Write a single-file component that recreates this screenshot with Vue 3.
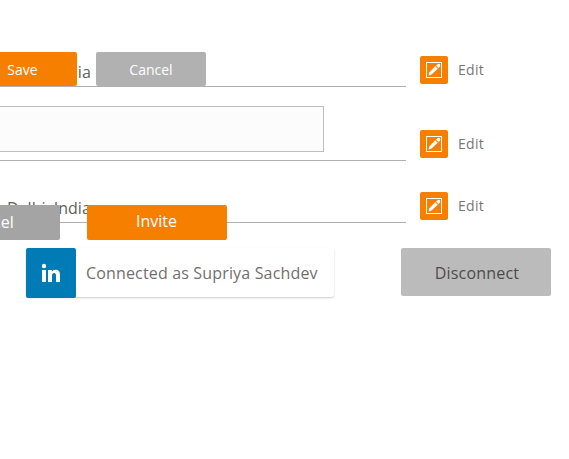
<script setup>
const rows = [
  { size: 'first', value: 'Delhi, India' },
  { size: 'second', value: '' },
  { size: 'third', value: 'Delhi, India' }
]
</script>

<template>
  <main class="page">
    <section v-for="row in rows" :key="row.size" class="row" :class="row.size">
      <div class="field">
        <span v-if="row.value" class="value">{{ row.value }}</span>
        <div v-else class="input"></div>
      </div>
      <div class="edit">
        <span class="edit-icon">
          <svg width="28" height="28" viewBox="0 0 28 28">
            <rect x="6.5" y="6.5" width="15" height="15" fill="none" stroke="#fff" />
            <path d="M8.6 19.4 9.3 16.6 15.2 10.3 17.8 12.8 11.6 18.6Z" fill="#fff" />
            <path d="M16 9.6 17.6 8.2Q19 7.4 19.8 8.3 20.7 9.2 19.9 10.4L18.5 12Z" fill="#fff" />
          </svg>
        </span>
        <span class="edit-label">Edit</span>
      </div>
    </section>

    <button class="btn save">Save</button>
    <button class="btn cancel">Cancel</button>
    <button class="btn dismiss">Cancel</button>
    <button class="btn invite">Invite</button>

    <section class="connection">
      <div class="account">
        <span class="badge">
          <svg width="50" height="50" viewBox="0 0 50 50" fill="#fff">
            <circle cx="18" cy="18" r="2.2" />
            <rect x="16" y="22" width="4" height="12" />
            <path d="M22 22h3.8v1.7c.8-1.3 2-2 3.7-2 3.2 0 4.5 2 4.5 5.1V34h-4v-6.6c0-1.6-.5-2.5-1.8-2.5-1.5 0-2.2 1-2.2 2.6V34h-4z" />
          </svg>
        </span>
        <span class="account-name">Connected as Supriya Sachdev</span>
      </div>
      <button class="disconnect">Disconnect</button>
    </section>
  </main>
</template>

<style>
body {
  background: #fff;
  overflow: hidden;
}
</style>

<style scoped>
.page {
  position: relative;
  width: 569px;
  height: 459px;
  overflow: hidden;
  font-family: "Open Sans", sans-serif;
}
.row {
  display: flex;
  gap: 14px;
}
.first { height: 87px; }
.second { height: 74px; }
.third { height: 62px; }
.field {
  box-sizing: border-box;
  width: 406px;
  border-bottom: 1px solid #b0b0b0;
  display: flex;
  align-items: flex-end;
}
.value {
  padding: 0 0 3px 7px;
  font-size: 16px;
  line-height: 22px;
  font-weight: 400;
  color: #606060;
}
.input {
  box-sizing: border-box;
  width: 324px;
  height: 46px;
  margin-bottom: 8px;
  border: 1px solid #bebebe;
  border-left: 0;
  background: #fcfcfc;
}
.edit {
  display: flex;
  align-items: flex-end;
  gap: 10px;
  padding-bottom: 3px;
}
.edit-icon {
  width: 28px;
  height: 28px;
  border-radius: 2px;
  background: #f77f00;
}
.edit-icon svg,
.badge svg {
  display: block;
}
.edit-label {
  font-size: 14px;
  line-height: 28px;
  letter-spacing: 0.3px;
  color: #777;
}
.btn,
.disconnect {
  box-sizing: border-box;
  margin: 0;
  padding: 0;
  border: 0;
  border-radius: 2px;
  font-family: inherit;
  color: #fff;
}
.btn {
  position: absolute;
}
.save {
  left: -33px;
  top: 52px;
  width: 110px;
  height: 34px;
  background: #f77f00;
  font-size: 14px;
  padding-left: 1px;
}
.cancel {
  left: 96px;
  top: 52px;
  width: 110px;
  height: 34px;
  background: #b1b1b1;
  font-size: 14px;
}
.dismiss {
  left: -80px;
  top: 205px;
  width: 140px;
  height: 35px;
  background: #a4a4a4;
  font-size: 16px;
  padding: 0 2px 2px 0;
}
.invite {
  left: 87px;
  top: 205px;
  width: 140px;
  height: 35px;
  background: #f77f00;
  font-size: 16px;
  padding: 0 1px 3px 0;
}
.connection {
  display: flex;
  align-items: flex-start;
  gap: 67px;
  padding: 25px 0 0 26px;
}
.account {
  display: flex;
  align-items: center;
  width: 308px;
  height: 49px;
  border-radius: 3px;
  box-shadow: 0 1px 2px rgba(0, 0, 0, 0.2);
}
.badge {
  width: 50px;
  height: 50px;
  border-radius: 2px;
  background: #007bb6;
}
.account-name {
  padding-left: 10px;
  font-size: 16px;
  letter-spacing: 0.16px;
  color: #707070;
  white-space: nowrap;
}
.disconnect {
  width: 150px;
  height: 48px;
  padding: 2px 0 0 2px;
  background: #bbb;
  font-size: 16px;
  letter-spacing: 0.2px;
  color: #4c4c4c;
}
</style>
